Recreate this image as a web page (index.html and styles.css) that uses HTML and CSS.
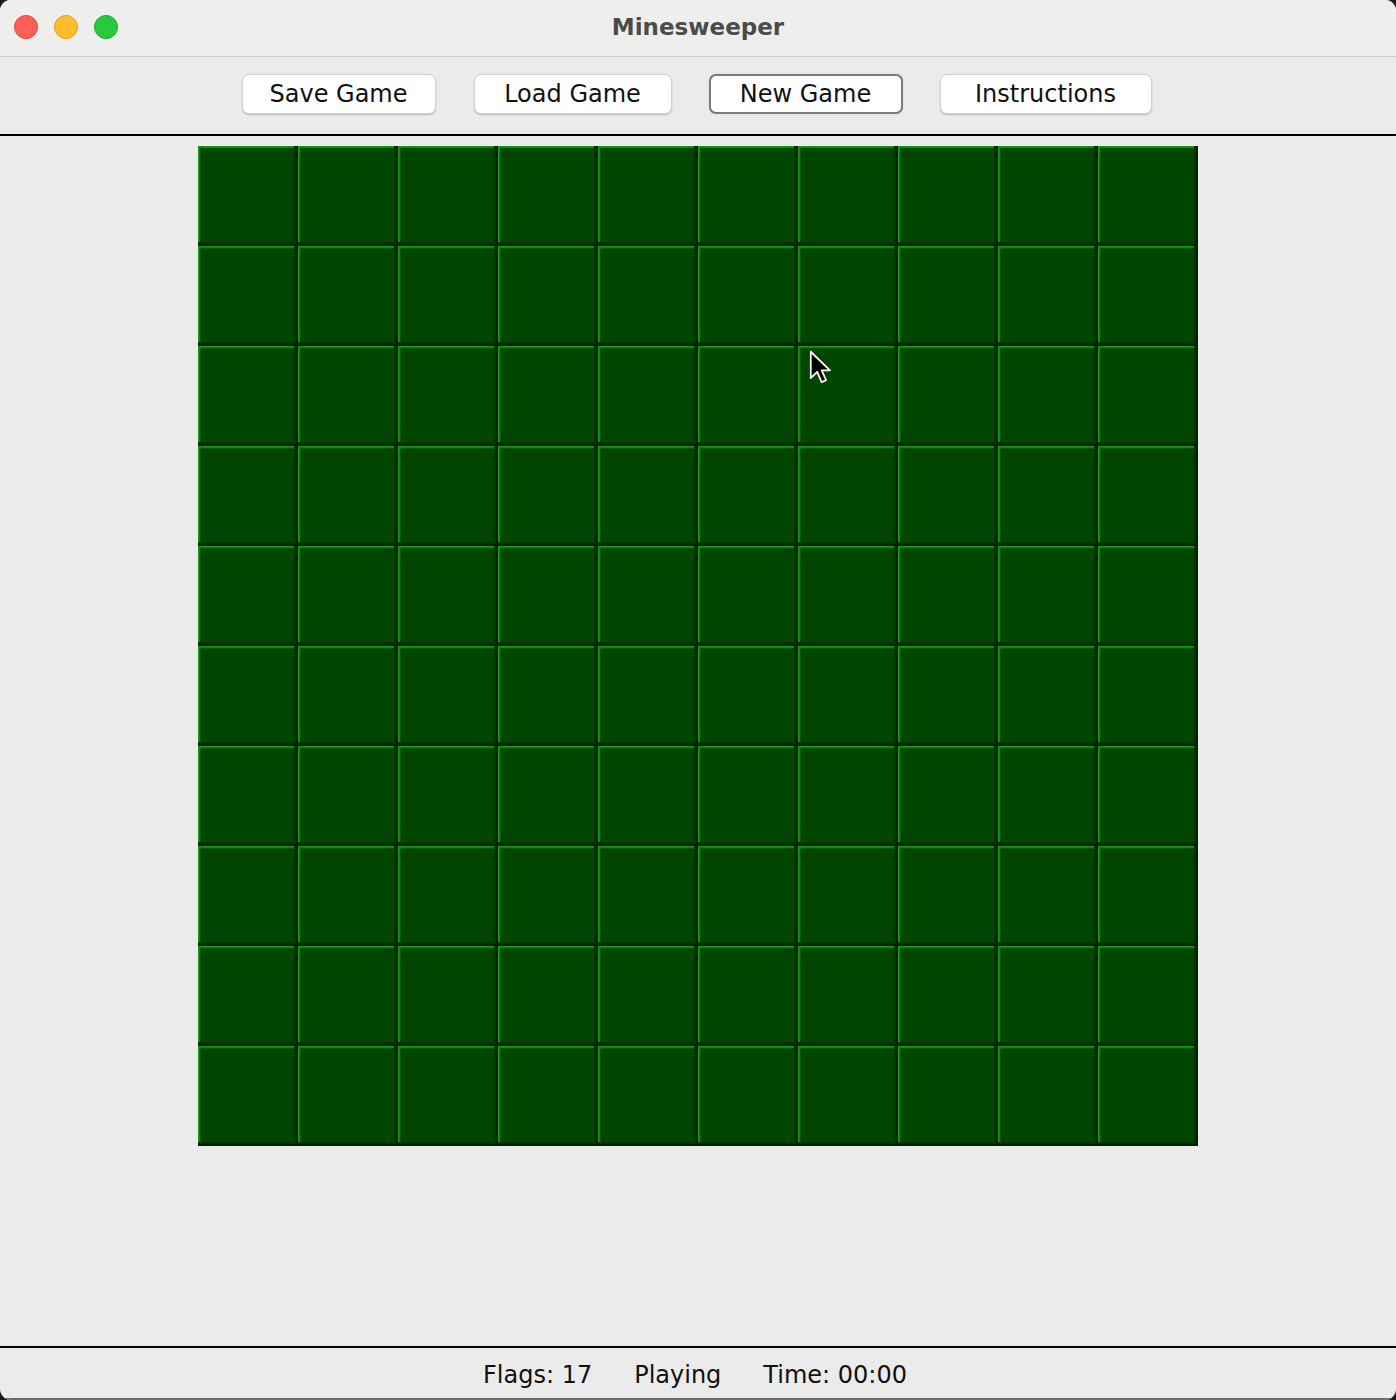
FILE: index.html
```html
<!DOCTYPE html>
<html>
<head>
<meta charset="utf-8">
<title>Minesweeper</title>
<link rel="stylesheet" href="styles.css">
</head>
<body>
<div class="window">
  <div class="titlebar">
    <div class="lights">
      <span class="light red"></span>
      <span class="light yellow"></span>
      <span class="light green"></span>
    </div>
    <div class="title">Minesweeper</div>
  </div>
  <div class="toolbar">
    <button class="btn btn-save">Save Game</button>
    <button class="btn btn-load">Load Game</button>
    <button class="btn btn-new focused">New Game</button>
    <button class="btn btn-instr">Instructions</button>
  </div>
  <div class="main">
    <div class="board">
      <div class="cell"></div><div class="cell"></div><div class="cell"></div><div class="cell"></div><div class="cell"></div><div class="cell"></div><div class="cell"></div><div class="cell"></div><div class="cell"></div><div class="cell"></div>
      <div class="cell"></div><div class="cell"></div><div class="cell"></div><div class="cell"></div><div class="cell"></div><div class="cell"></div><div class="cell"></div><div class="cell"></div><div class="cell"></div><div class="cell"></div>
      <div class="cell"></div><div class="cell"></div><div class="cell"></div><div class="cell"></div><div class="cell"></div><div class="cell"></div><div class="cell"></div><div class="cell"></div><div class="cell"></div><div class="cell"></div>
      <div class="cell"></div><div class="cell"></div><div class="cell"></div><div class="cell"></div><div class="cell"></div><div class="cell"></div><div class="cell"></div><div class="cell"></div><div class="cell"></div><div class="cell"></div>
      <div class="cell"></div><div class="cell"></div><div class="cell"></div><div class="cell"></div><div class="cell"></div><div class="cell"></div><div class="cell"></div><div class="cell"></div><div class="cell"></div><div class="cell"></div>
      <div class="cell"></div><div class="cell"></div><div class="cell"></div><div class="cell"></div><div class="cell"></div><div class="cell"></div><div class="cell"></div><div class="cell"></div><div class="cell"></div><div class="cell"></div>
      <div class="cell"></div><div class="cell"></div><div class="cell"></div><div class="cell"></div><div class="cell"></div><div class="cell"></div><div class="cell"></div><div class="cell"></div><div class="cell"></div><div class="cell"></div>
      <div class="cell"></div><div class="cell"></div><div class="cell"></div><div class="cell"></div><div class="cell"></div><div class="cell"></div><div class="cell"></div><div class="cell"></div><div class="cell"></div><div class="cell"></div>
      <div class="cell"></div><div class="cell"></div><div class="cell"></div><div class="cell"></div><div class="cell"></div><div class="cell"></div><div class="cell"></div><div class="cell"></div><div class="cell"></div><div class="cell"></div>
      <div class="cell"></div><div class="cell"></div><div class="cell"></div><div class="cell"></div><div class="cell"></div><div class="cell"></div><div class="cell"></div><div class="cell"></div><div class="cell"></div><div class="cell"></div>
    </div>
  </div>
  <div class="status">
    <span>Flags: 17</span>
    <span>Playing</span>
    <span>Time: 00:00</span>
  </div>
  <svg class="cursor" width="28" height="35" viewBox="0 0 24 30">
    <path d="M1.5 1.5 L1.5 24 L7 18.8 L10.8 27.5 L14.6 25.9 L10.9 17.4 L18 17.4 Z" fill="#000" stroke="#fff" stroke-width="1.5" stroke-linejoin="round"/>
  </svg>
</div>
</body>
</html>
```

FILE: styles.css
```css
* { box-sizing: border-box; }
html, body { margin: 0; padding: 0; }
body {
  background: #1c1c1c;
  width: 1396px;
  height: 1400px;
  overflow: hidden;
  font-family: "DejaVu Sans", "Liberation Sans", sans-serif;
}
.window {
  position: relative;
  width: 1396px;
  height: 1400px;
  background: #ebebeb;
  border-radius: 11px;
  overflow: hidden;
  display: flex;
  flex-direction: column;
}
.titlebar {
  height: 57px;
  flex: none;
  background: #eeeeec;
  border-bottom: 1px solid #c9c9c9;
  display: flex;
  align-items: center;
  justify-content: center;
  position: relative;
}
.lights {
  position: absolute;
  left: 14px;
  top: 15px;
  display: flex;
  gap: 16px;
}
.light {
  width: 24px;
  height: 24px;
  border-radius: 50%;
  display: block;
}
.light.red { background: #fe5f57; border: 1px solid #e0443e; }
.light.yellow { background: #febc2e; border: 1px solid #dea123; }
.light.green { background: #28c840; border: 1px solid #1aab29; }
.title {
  font-weight: bold;
  font-size: 23px;
  color: #4b4b4b;
  margin-top: -2px;
}
.toolbar {
  height: 79px;
  flex: none;
  border-bottom: 2px solid #000;
  display: flex;
  justify-content: center;
  align-items: flex-start;
  padding-top: 17px;
  gap: 37px;
  padding-right: 3px;
}
.btn {
  height: 40px;
  padding: 0;
  text-align: center;
  font-family: "DejaVu Sans", "Liberation Sans", sans-serif;
  font-size: 24px;
  color: #111;
  background: #fff;
  border: 1px solid #d2d2d2;
  border-radius: 7px;
  box-shadow: 0 1px 1.5px rgba(0,0,0,0.22);
  line-height: 36px;
}
.btn-save { width: 194px; }
.btn-load { width: 198px; margin-left: 1px; }
.btn-new { width: 194px; }
.btn-instr { width: 212px; }
.btn.focused {
  border: 2px solid #7b7b7b;
  box-shadow: 0 0 1px rgba(80,140,80,0.4);
}
.main {
  flex: 1;
  display: flex;
  justify-content: center;
  padding-top: 10px;
}
.board {
  display: grid;
  grid-template-columns: repeat(10, 100px);
  grid-template-rows: repeat(10, 100px);
  width: 1000px;
  height: 1000px;
}
.cell {
  background: #004600;
  box-shadow:
    inset -2px -2px 0 #002200,
    inset -4px -4px 0 #003500,
    inset 1px 1px 0 #189c18,
    inset 2px 2px 0 #0e7e0e,
    inset 3px 3px 0 #075c07;
}
.status {
  height: 54px;
  flex: none;
  border-top: 2px solid #000;
  border-bottom: 2px solid #6d6d6d;
  display: flex;
  justify-content: center;
  align-items: center;
  gap: 42px;
  font-size: 24px;
  color: #111;
  padding-top: 4px;
  padding-right: 6px;
}
.cursor {
  position: absolute;
  left: 809px;
  top: 350px;
}
```
